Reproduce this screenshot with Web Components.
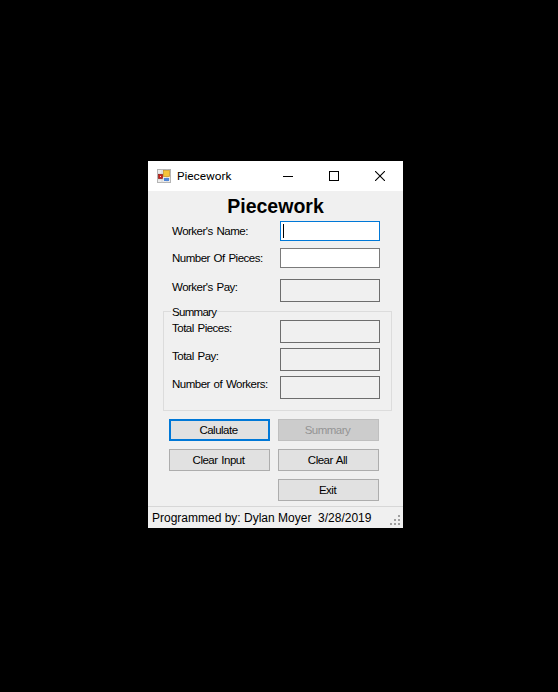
<!DOCTYPE html>
<html>
<head>
<meta charset="utf-8">
<title>Piecework</title>
<style>
    html, body { margin: 0; height: 100%; background: #000; }
    body {
        box-sizing: border-box;
        padding: 161px 0 0 148px;
        font: 11.5px "Liberation Sans", Arial, sans-serif;
        letter-spacing: -0.5px;
        word-spacing: 1px;
        color: #000;
    }
</style>
</head>
<body>
<win-form caption="Piecework" status="Programmed by: Dylan Moyer  3/28/2019">
    <h-title>Piecework</h-title>
    <form-row label="Worker's Name:" kind="focus" style="--row-h: 20px; --after: 7px"></form-row>
    <form-row label="Number Of Pieces:" kind="input" style="--row-h: 20px; --after: 11px"></form-row>
    <form-row label="Worker's Pay:" kind="output" style="--row-h: 23px; --after: 3px; --label-shift: -4px"></form-row>
    <group-box legend="Summary">
        <form-row label="Total Pieces:" kind="output" style="--row-h: 23px; --after: 5px; --label-shift: -4px"></form-row>
        <form-row label="Total Pay:" kind="output" style="--row-h: 23px; --after: 5px; --label-shift: -4px"></form-row>
        <form-row label="Number of Workers:" kind="output" style="--row-h: 23px; --after: 0; --label-shift: -4px"></form-row>
    </group-box>
    <button-grid>
        <win-button focused>Calulate</win-button>
        <win-button disabled>Summary</win-button>
        <win-button>Clear Input</win-button>
        <win-button>Clear All</win-button>
        <win-button style="grid-column: 2">Exit</win-button>
    </button-grid>
</win-form>

<script>
class WinForm extends HTMLElement {
    constructor() {
        super();
        this.attachShadow({ mode: 'open' });
    }

    connectedCallback() {
        this.shadowRoot.innerHTML = `
        <style>
            :host {
                display: flex;
                flex-direction: column;
                width: 255px;
                height: 367px;
                background: #f0f0f0;
            }
            .titlebar {
                display: flex;
                align-items: center;
                height: 30px;
                background: #fff;
                flex: none;
            }
            .titlebar svg.icon { margin: 0 6px 0 9px; flex: none; }
            .caption {
                flex: 1;
                font: 11.8px Roboto, "Liberation Sans", sans-serif;
                letter-spacing: 0;
            }
            .caption-btn {
                width: 46px;
                height: 30px;
                display: flex;
                align-items: center;
                justify-content: center;
                flex: none;
            }
            .content { flex: 1; }
            .status {
                flex: none;
                box-sizing: border-box;
                height: 22px;
                border-top: 1px solid #d7d7d7;
                display: flex;
                align-items: center;
                justify-content: space-between;
                padding-left: 4px;
                white-space: pre;
                font-size: 12px;
                letter-spacing: 0;
                word-spacing: 0;
            }
            .grip { align-self: flex-end; margin: 0 3px 3px 0; }
        </style>
        <div class="titlebar">
            <svg class="icon" width="14" height="14" viewBox="0 0 14 14">
                <rect x="0.5" y="0.5" width="13" height="13" fill="#ececec" stroke="#b4b4b4"/>
                <path d="M0 5H14M0 10H14M5 0V14M10 0V14" stroke="#c8c8c8" stroke-width="0.6"/>
                <rect x="6.5" y="1.5" width="6" height="6" fill="#f5c43a" stroke="#c8921c" stroke-width="0.7"/>
                <rect x="1.5" y="5.5" width="4" height="4" fill="#c9241c" stroke="#8e1a14" stroke-width="0.7"/>
                <rect x="3" y="7" width="1" height="1" fill="#f6dada"/>
                <rect x="7" y="9" width="5" height="3" fill="#4f86d8"/>
            </svg>
            <span class="caption">${this.getAttribute('caption')}</span>
            <div class="caption-btn">
                <svg width="10" height="10"><path d="M0 5.5H10" stroke="#000" fill="none"/></svg>
            </div>
            <div class="caption-btn">
                <svg width="10" height="10"><rect x="0.5" y="0.5" width="9" height="9" stroke="#000" fill="none"/></svg>
            </div>
            <div class="caption-btn">
                <svg width="10" height="10"><path d="M0 0L10 10M10 0L0 10" stroke="#000" stroke-width="1.1" fill="none"/></svg>
            </div>
        </div>
        <div class="content"><slot></slot></div>
        <div class="status">
            <span>${this.getAttribute('status')}</span>
            <svg class="grip" width="10" height="10" fill="#a0a0a0">
                <rect x="8" y="0" width="2" height="2"/>
                <rect x="4" y="4" width="2" height="2"/><rect x="8" y="4" width="2" height="2"/>
                <rect x="0" y="8" width="2" height="2"/><rect x="4" y="8" width="2" height="2"/><rect x="8" y="8" width="2" height="2"/>
            </svg>
        </div>
        `;
    }
}

class HTitle extends HTMLElement {
    constructor() {
        super();
        this.attachShadow({ mode: 'open' });
        this.shadowRoot.innerHTML = `
        <style>
            :host {
                display: block;
                height: 30px;
                line-height: 30px;
                text-align: center;
                font-size: 19.5px;
                font-weight: bold;
                letter-spacing: 0;
            }
        </style>
        <slot></slot>
        `;
    }
}

class FormRow extends HTMLElement {
    constructor() {
        super();
        this.attachShadow({ mode: 'open' });
    }

    connectedCallback() {
        const kind = this.getAttribute('kind');
        this.shadowRoot.innerHTML = `
        <style>
            :host {
                display: grid;
                grid-template-columns: 108px 100px;
                height: var(--row-h);
                margin-bottom: var(--after);
                padding-left: var(--row-left, 24px);
                align-items: center;
            }
            .label { position: relative; top: var(--label-shift, 0); white-space: nowrap; }
            .field {
                box-sizing: border-box;
                height: 100%;
                display: flex;
                align-items: center;
                padding-left: 2px;
            }
            .input { background: #fff; border: 1px solid #7a7a7a; }
            .focus { background: #fff; border: 1px solid #0078d7; }
            .output { background: #f0f0f0; border: 1px solid #6d6d6d; }
            .caret { width: 1px; height: 14px; background: #000; }
        </style>
        <span class="label">${this.getAttribute('label')}</span>
        <div class="field ${kind}">${kind === 'focus' ? '<span class="caret"></span>' : ''}</div>
        `;
    }
}

class GroupBox extends HTMLElement {
    constructor() {
        super();
        this.attachShadow({ mode: 'open' });
    }

    connectedCallback() {
        this.shadowRoot.innerHTML = `
        <style>
            :host {
                display: block;
                margin-left: 15px;
                width: 229px;
                --row-left: 8px;
            }
            fieldset {
                box-sizing: border-box;
                margin: 0;
                height: 106px;
                padding: 2px 0 0;
                border: 1px solid #dcdcdc;
            }
            legend {
                margin-left: 7px;
                padding: 0 1px;
                height: 13px;
                line-height: 15px;
                letter-spacing: -0.7px;
            }
        </style>
        <fieldset>
            <legend>${this.getAttribute('legend')}</legend>
            <slot></slot>
        </fieldset>
        `;
    }
}

class ButtonGrid extends HTMLElement {
    constructor() {
        super();
        this.attachShadow({ mode: 'open' });
        this.shadowRoot.innerHTML = `
        <style>
            :host {
                display: grid;
                grid-template-columns: 101px 101px;
                grid-auto-rows: 22px;
                gap: 8px;
                margin: 8px 0 0 21px;
            }
        </style>
        <slot></slot>
        `;
    }
}

class WinButton extends HTMLElement {
    constructor() {
        super();
        this.attachShadow({ mode: 'open' });
        this.shadowRoot.innerHTML = `
        <style>
            :host {
                display: flex;
                align-items: center;
                justify-content: center;
                box-sizing: border-box;
                padding-right: 2px;
                background: #e1e1e1;
                border: 1px solid #adadad;
            }
            :host([focused]) { border: 2px solid #0078d7; }
            :host([disabled]) { background: #cccccc; border-color: #bfbfbf; color: #949494; }
        </style>
        <slot></slot>
        `;
    }
}

customElements.define('win-form', WinForm);
customElements.define('h-title', HTitle);
customElements.define('form-row', FormRow);
customElements.define('group-box', GroupBox);
customElements.define('button-grid', ButtonGrid);
customElements.define('win-button', WinButton);
</script>
</body>
</html>
